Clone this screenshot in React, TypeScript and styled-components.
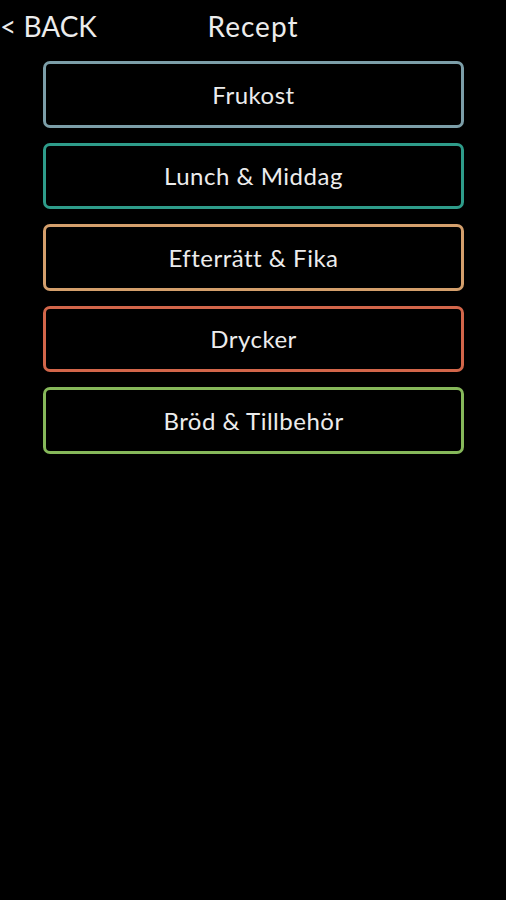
import styled, { createGlobalStyle } from "styled-components";

const GlobalStyle = createGlobalStyle`
  html, body {
    margin: 0;
    padding: 0;
    background: #000;
  }
  body {
    font-family: Lato, "Open Sans", sans-serif;
    color: #ececec;
  }
`;

const Screen = styled.div`
  width: 506px;
  min-height: 900px;
  background: #000;
`;

const Header = styled.header`
  display: grid;
  grid-template-columns: 1fr auto 1fr;
  align-items: center;
  height: 52px;
  margin-bottom: 9px;
`;

const BackButton = styled.button`
  justify-self: start;
  background: none;
  border: none;
  padding: 0;
  font-family: inherit;
  font-size: 28px;
  color: #ececec;
  cursor: pointer;
`;

const Title = styled.h1`
  margin: 0;
  font-size: 28px;
  font-weight: 400;
  letter-spacing: 1px;
`;

const CategoryList = styled.nav`
  display: flex;
  flex-direction: column;
  gap: 15px;
  padding: 0 42px 0 43px;
`;

const Category = styled.button<{ $color: string }>`
  box-sizing: border-box;
  height: 66.5px;
  width: 100%;
  padding: 0;
  background: #000;
  border: 3px solid ${(p) => p.$color};
  border-radius: 7px;
  font-family: inherit;
  font-size: 24px;
  letter-spacing: 0.5px;
  color: #ececec;
  cursor: pointer;
`;

const categories = [
  { name: "Frukost", color: "#7c9ea8" },
  { name: "Lunch & Middag", color: "#2e9c8a" },
  { name: "Efterrätt & Fika", color: "#d49f6c" },
  { name: "Drycker", color: "#d2664a" },
  { name: "Bröd & Tillbehör", color: "#86b85a" },
];

const App = () => {
  return (
    <>
      <GlobalStyle />
      <Screen>
        <Header>
          <BackButton>&lt; BACK</BackButton>
          <Title>Recept</Title>
          <span />
        </Header>
        <CategoryList>
          {categories.map((c) => (
            <Category key={c.name} $color={c.color}>
              {c.name}
            </Category>
          ))}
        </CategoryList>
      </Screen>
    </>
  );
};

export default App;
